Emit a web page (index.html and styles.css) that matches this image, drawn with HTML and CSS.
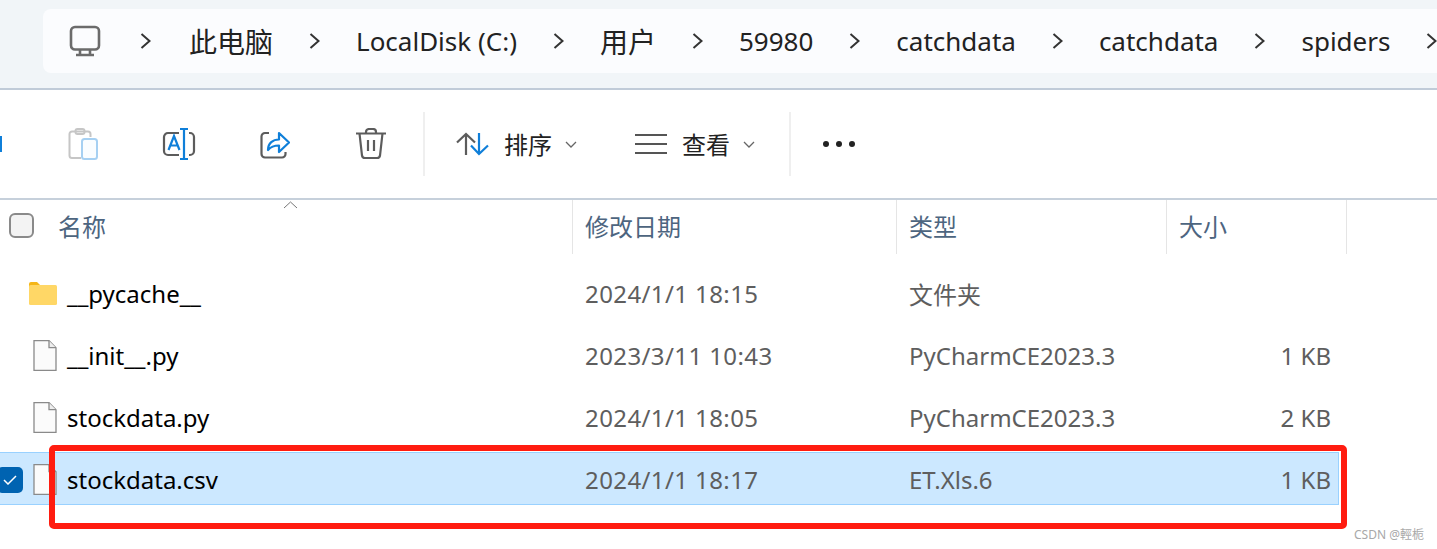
FILE: index.html
```html
<!DOCTYPE html>
<html lang="zh-CN">
<head>
  <meta charset="UTF-8" />
  <title>spiders</title>
  <link rel="stylesheet" href="styles.css">
</head>
<body>

<!-- Address bar -->
<div class="top-area">
  <div class="crumbs">
    <svg class="pc-icon" width="32" height="32" viewBox="0 0 32 32" fill="none" stroke="#6b6b6b" stroke-width="2.6">
      <rect x="2" y="2" width="28" height="22.5" rx="4"/>
      <path d="M11 24.5v5M21 24.5v5M7 30h18"/>
    </svg>
    <svg class="chev" width="11" height="18" viewBox="0 0 11 18" fill="none" stroke="#333" stroke-width="2"><path d="M1.5 2l8 7-8 7"/></svg>
    <span class="cjk first-crumb">此电脑</span>
    <svg class="chev" width="11" height="18" viewBox="0 0 11 18" fill="none" stroke="#333" stroke-width="2"><path d="M1.5 2l8 7-8 7"/></svg>
    <span>LocalDisk (C:)</span>
    <svg class="chev" width="11" height="18" viewBox="0 0 11 18" fill="none" stroke="#333" stroke-width="2"><path d="M1.5 2l8 7-8 7"/></svg>
    <span class="cjk">用户</span>
    <svg class="chev" width="11" height="18" viewBox="0 0 11 18" fill="none" stroke="#333" stroke-width="2"><path d="M1.5 2l8 7-8 7"/></svg>
    <span>59980</span>
    <svg class="chev" width="11" height="18" viewBox="0 0 11 18" fill="none" stroke="#333" stroke-width="2"><path d="M1.5 2l8 7-8 7"/></svg>
    <span>catchdata</span>
    <svg class="chev" width="11" height="18" viewBox="0 0 11 18" fill="none" stroke="#333" stroke-width="2"><path d="M1.5 2l8 7-8 7"/></svg>
    <span>catchdata</span>
    <svg class="chev" width="11" height="18" viewBox="0 0 11 18" fill="none" stroke="#333" stroke-width="2"><path d="M1.5 2l8 7-8 7"/></svg>
    <span>spiders</span>
    <svg class="chev" width="11" height="18" viewBox="0 0 11 18" fill="none" stroke="#333" stroke-width="2"><path d="M1.5 2l8 7-8 7"/></svg>
  </div>
</div>

<!-- Toolbar -->
<div class="toolbar">
  <div class="cut-icon"></div>
  <div class="tool">
    <svg width="30" height="32" viewBox="0 0 30 32" fill="none" stroke-width="2">
      <path d="M13 30H4a2.500 2.500 0 0 1-2.500-2.500V6A2.500 2.500 0 0 1 4 3.500h16A2.500 2.500 0 0 1 22.500 6v3" stroke="#c6c6c6"/>
      <rect x="7.500" y="1" width="9" height="5" rx="2" stroke="#c6c6c6"/>
      <rect x="14" y="11" width="15" height="20" rx="2.500" stroke="#a6d0f2" fill="#fafdff"/>
    </svg>
  </div>
  <div class="tool">
    <svg width="34" height="32" viewBox="0 0 34 32" fill="none" stroke-width="2.200">
      <path d="M17 5H6a4 4 0 0 0-4 4v14a4 4 0 0 0 4 4h11M27 5h1a4 4 0 0 1 4 4v14a4 4 0 0 1-4 4h-1" stroke="#5c5c5c"/>
      <path d="M6.500 22l5.500-14 5.500 14M8.500 17.500h7" stroke="#0f7fd9"/>
      <path d="M22 1v30M18 1h8M18 31h8" stroke="#0f7fd9"/>
    </svg>
  </div>
  <div class="tool">
    <svg width="30" height="32" viewBox="0 0 30 32" fill="none" stroke-width="2.200">
      <path d="M9 5H5a3.500 3.500 0 0 0-3.500 3.500V26A3.500 3.500 0 0 0 5 29.500h17a3.500 3.500 0 0 0 3.500-3.500v-2" stroke="#5c5c5c"/>
      <path d="M8 22c0-7 5-10.500 11-10.500V5l10 9.500-10 9.500v-6.500C14 17.500 11 18.500 8 22z" stroke="#0f7fd9" stroke-linejoin="round"/>
    </svg>
  </div>
  <div class="tool">
    <svg width="30" height="32" viewBox="0 0 30 32" fill="none" stroke="#5c5c5c" stroke-width="2.200">
      <path d="M0 5.500h30M3.500 5.500l2.500 22a3 3 0 0 0 3 2.500h12a3 3 0 0 0 3-2.500l2.500-22M10 5.500V4a3 3 0 0 1 3-3h4a3 3 0 0 1 3 3v1.500M12 12v11M18 12v11"/>
    </svg>
  </div>
  <div class="tool-sep"></div>
  <div class="menu-btn sort-btn">
    <svg width="33" height="24" viewBox="0 0 33 24" fill="none" stroke-width="2.200">
      <path d="M10 23V2M1 10.500L10 2l9 8.500" stroke="#5c5c5c"/>
      <path d="M23 1v21M15 13.500l8 8.500 9-8.500" stroke="#0f7fd9"/>
    </svg>
    <span>排序</span>
    <svg width="12" height="7" viewBox="0 0 12 7" fill="none" stroke="#666" stroke-width="1.300"><path d="M1 1l5 5 5-5"/></svg>
  </div>
  <div class="menu-btn view-btn">
    <svg width="32" height="20" viewBox="0 0 32 20" fill="none" stroke="#555" stroke-width="1.800"><path d="M0 1h32M0 10h32M0 19h32"/></svg>
    <span>查看</span>
    <svg width="12" height="7" viewBox="0 0 12 7" fill="none" stroke="#666" stroke-width="1.300"><path d="M1 1l5 5 5-5"/></svg>
  </div>
  <div class="tool-sep"></div>
  <svg class="more-icon" width="32" height="6" viewBox="0 0 32 6" fill="#222"><circle cx="3" cy="3" r="3"/><circle cx="16" cy="3" r="3"/><circle cx="29" cy="3" r="3"/></svg>
</div>

<!-- List header -->
<div class="list-head">
  <div class="head-cell name-head">
    <div class="check-empty"></div>
    <span>名称</span>
    <svg class="sort-caret" width="15" height="8" viewBox="0 0 15 8" fill="none" stroke="#777" stroke-width="1"><path d="M1 7l6.500-6 6.500 6"/></svg>
  </div>
  <div class="head-cell">修改日期</div>
  <div class="head-cell">类型</div>
  <div class="head-cell">大小</div>
</div>

<!-- Files -->
<div class="files">
  <div class="row">
    <div class="col-name">
      <svg class="file-icon" width="28" height="23" viewBox="0 0 28 23">
        <path d="M0 2a2 2 0 0 1 2-2h6l3 3v3H0z" fill="#f5b618"/>
        <rect y="3" width="28" height="20" rx="1.500" fill="#ffd766"/>
      </svg>
      <span>__pycache__</span>
    </div>
    <div class="col-cell col-date">2024/1/1 18:15</div>
    <div class="col-cell">文件夹</div>
    <div class="col-cell col-size"></div>
  </div>
  <div class="row">
    <div class="col-name">
      <svg class="file-icon" width="28" height="31" viewBox="0 0 28 31" fill="#fbfbfb" stroke="#8a8a8a" stroke-width="1.300"><path d="M5 .7h15l7 7v22.600H5z"/><path d="M20 .7v7h7" fill="#eee"/></svg>
      <span>__init__.py</span>
    </div>
    <div class="col-cell col-date">2023/3/11 10:43</div>
    <div class="col-cell">PyCharmCE2023.3</div>
    <div class="col-cell col-size">1 KB</div>
  </div>
  <div class="row">
    <div class="col-name">
      <svg class="file-icon" width="28" height="31" viewBox="0 0 28 31" fill="#fbfbfb" stroke="#8a8a8a" stroke-width="1.300"><path d="M5 .7h15l7 7v22.600H5z"/><path d="M20 .7v7h7" fill="#eee"/></svg>
      <span>stockdata.py</span>
    </div>
    <div class="col-cell col-date">2024/1/1 18:05</div>
    <div class="col-cell">PyCharmCE2023.3</div>
    <div class="col-cell col-size">2 KB</div>
  </div>
  <div class="row selected">
    <div class="check-on">
      <svg width="14" height="10" viewBox="0 0 14 10" fill="none" stroke="#fff" stroke-width="1.500"><path d="M1 5l4 4 8-8"/></svg>
    </div>
    <div class="col-name">
      <svg class="file-icon" width="28" height="31" viewBox="0 0 28 31" fill="#fbfbfb" stroke="#8a8a8a" stroke-width="1.300"><path d="M5 .7h15l7 7v22.600H5z"/><path d="M20 .7v7h7" fill="#eee"/></svg>
      <span>stockdata.csv</span>
    </div>
    <div class="col-cell col-date">2024/1/1 18:17</div>
    <div class="col-cell">ET.Xls.6</div>
    <div class="col-cell col-size">1 KB</div>
    <div class="red-frame"></div>
  </div>
</div>

<div class="watermark">CSDN @輕栀</div>

</body>
</html>
```

FILE: styles.css
```css
* { box-sizing: border-box; margin: 0; padding: 0; }

body {
  position: relative;
  width: 1437px;
  height: 549px;
  overflow: hidden;
  background: white;
  font-family: "Noto Sans", "Noto Sans CJK SC", sans-serif;
}

.top-area {
  height: 90px;
  padding: 9px 0 0 43px;
  background: #f1f5f8;
  border-bottom: 2px solid #c0cbd8;
}

.crumbs {
  display: flex;
  align-items: center;
  gap: 36px;
  height: 64px;
  padding-left: 26px;
  background: #fbfcfe;
  border-radius: 8px 0 0 8px;
  font-size: 26px;
  color: #222;
  white-space: nowrap;
}

.crumbs > * { flex-shrink: 0; }
.crumbs .cjk { font-size: 28px; }
.crumbs .first-crumb { margin-left: 2px; }
.pc-icon { margin-right: 3px; }

.toolbar {
  display: flex;
  align-items: center;
  height: 110px;
  border-bottom: 2px solid #c6d0db;
}

.cut-icon {
  width: 2px;
  height: 16px;
  margin-right: 33px;
  background: #0f7fd9;
}

.tool {
  display: flex;
  justify-content: center;
  align-items: center;
  width: 96px;
}

.tool-sep {
  width: 2px;
  height: 64px;
  margin-left: 4px;
  background: #efefef;
}

.menu-btn {
  display: flex;
  align-items: center;
  font-size: 24px;
  color: #222;
}

.menu-btn span { margin: 0 13px 2px 15px; }
.sort-btn { margin-left: 31px; margin-right: 58px; }
.view-btn { margin-right: 30px; }
.more-icon { margin-left: 32px; }

.list-head {
  display: grid;
  grid-template-columns: 573px 324px 270px 180px;
  width: 1347px;
  height: 54px;
}

.head-cell {
  display: flex;
  align-items: center;
  padding: 0 0 3px 12px;
  border-right: 1px solid #e5e5e5;
  font-size: 24px;
  color: #4d6580;
}

.name-head {
  position: relative;
  padding-left: 9px;
}

.check-empty {
  width: 25px;
  height: 25px;
  margin-right: 24px;
  background: #f3f3f3;
  border: 2px solid #8a8a8a;
  border-radius: 6px;
}

.sort-caret {
  position: absolute;
  top: 1px;
  left: 283px;
}

.files { padding-top: 13px; }

.row {
  position: relative;
  display: grid;
  grid-template-columns: 573px 324px 270px 172px;
  align-items: center;
  width: 1339px;
  height: 53px;
  margin-bottom: 9px;
  font-size: 24px;
  color: #5e5e5e;
}

.col-name {
  display: flex;
  align-items: center;
  padding-left: 29px;
  color: #000;
}

.file-icon { margin-right: 10px; flex-shrink: 0; }

.col-cell { padding-left: 12px; white-space: nowrap; }
.col-date { letter-spacing: .4px; }
.col-size { padding: 0 8px 0 0; text-align: right; }

.selected {
  margin-top: -1px;
  padding-top: 2px;
  background: #cce8ff;
  border: 1px solid #99d1ff;
  border-left: none;
}

.check-on {
  position: absolute;
  top: 14px;
  left: -3px;
  display: flex;
  justify-content: center;
  align-items: center;
  width: 26px;
  height: 26px;
  background: #0063b1;
  border-radius: 5px;
}

.red-frame {
  position: absolute;
  top: -8px;
  left: 49px;
  width: 1298px;
  height: 84px;
  border: 6px solid #ff1c10;
  border-radius: 5px;
}

.watermark {
  position: absolute;
  top: 525px;
  left: 1354px;
  font-size: 12px;
  color: #a8a8a8;
}
```
